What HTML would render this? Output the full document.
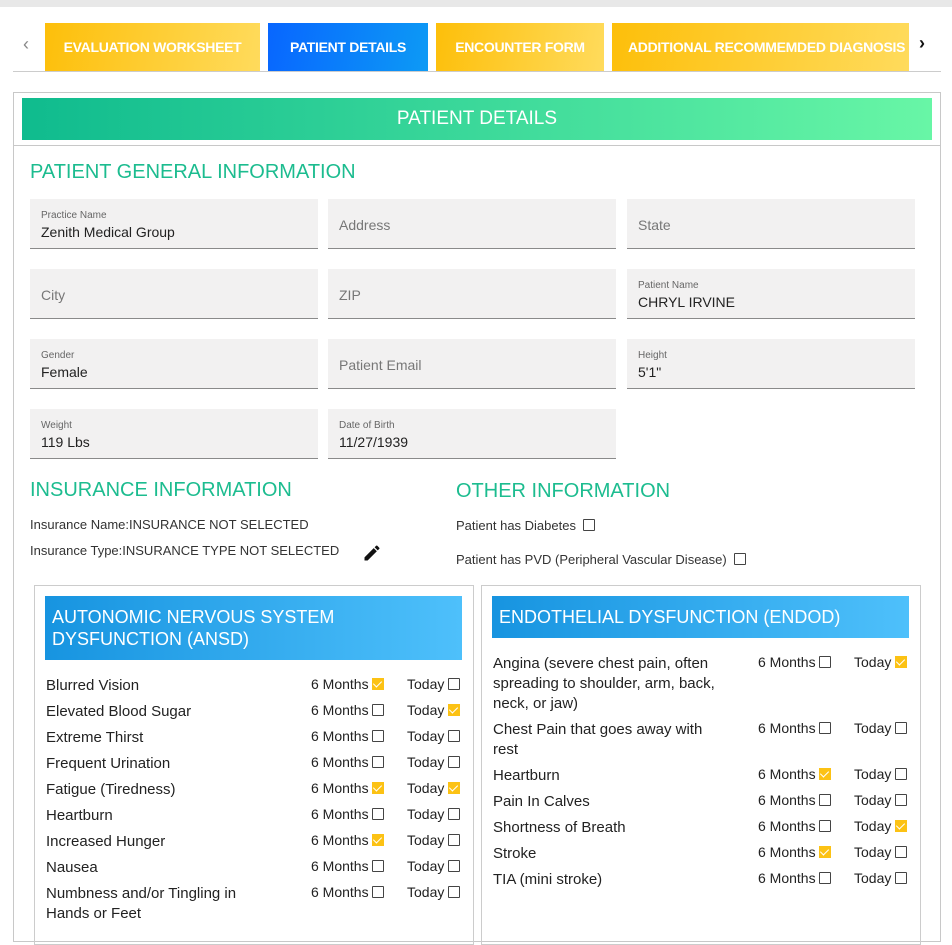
<!DOCTYPE html>
<html><head><style>
*{box-sizing:border-box;margin:0;padding:0}
body{width:952px;height:927px;overflow:hidden;background:#fff;font-family:"Liberation Sans",sans-serif;position:relative;color:#222}
.a{position:absolute}
.tab{position:absolute;top:23px;height:48px;color:#fff;font-weight:bold;font-size:14px;line-height:48px;text-align:center;letter-spacing:-0.3px;white-space:nowrap;overflow:hidden;background:linear-gradient(100deg,#fdbf0a,#ffdb5c)}
.f{position:absolute;width:288px;height:50px;background:#f2f1f1;border-bottom:1px solid #8a8a8a;padding-left:11px}
.f .l{font-size:10px;color:#666;margin-top:11px}
.f .v{font-size:14px;color:#222;margin-top:3px}
.f .p{font-size:14px;color:#777;line-height:52px}
.h{position:absolute;color:#1cbc8f;font-size:20px}
.sm{position:absolute;font-size:13px;color:#333}
.cb{display:inline-block;width:12px;height:12px;border:1.5px solid #444;border-radius:1px;vertical-align:-1px}
.ck{display:inline-block;width:12px;height:12px;background:#fcc214;vertical-align:-1px;position:relative}
.ck:after{content:"";position:absolute;left:3px;top:1px;width:4px;height:7px;border:solid #fff;border-width:0 1.2px 1.2px 0;transform:rotate(45deg)}
.it{position:absolute;font-size:15px;color:#222;line-height:20px}
.m{position:absolute;font-size:14px;color:#222}
</style></head><body>
<div class="a" style="left:0;top:0;width:952px;height:7px;background:#e8e8e8"></div>
<div class="a" style="left:23px;top:34px;color:#888;font-size:18px">‹</div>
<div class="a" style="left:919px;top:33px;color:#111;font-size:18px;font-weight:bold">›</div>
<div class="tab" style="left:45px;width:215px">EVALUATION WORKSHEET</div>
<div class="tab" style="left:268px;width:160px;background:linear-gradient(100deg,#0866ff,#0d9af5)">PATIENT DETAILS</div>
<div class="tab" style="left:436px;width:168px">ENCOUNTER FORM</div>
<div class="tab" style="left:612px;width:297px;text-align:left;padding-left:16px">ADDITIONAL RECOMMEMDED DIAGNOSIS</div>
<div class="a" style="left:13px;top:71px;width:928px;height:1px;background:#ccc"></div>
<div class="a" style="left:13px;top:92px;width:928px;height:850px;border:1px solid #c8c8c8"></div>
<div class="a" style="left:13px;top:145px;width:928px;height:1px;background:#c8c8c8"></div>
<div class="a" style="left:22px;top:98px;width:910px;height:42px;background:linear-gradient(90deg,#0fbb8e,#68f6a6);color:#fff;font-size:19px;text-align:center;line-height:42px">PATIENT DETAILS</div>
<div class="h" style="left:30px;top:161px">PATIENT GENERAL INFORMATION</div>

<div class="f" style="left:30px;top:199px"><div class="l">Practice Name</div><div class="v">Zenith Medical Group</div></div>
<div class="f" style="left:328px;top:199px"><div class="p">Address</div></div>
<div class="f" style="left:627px;top:199px"><div class="p">State</div></div>
<div class="f" style="left:30px;top:269px"><div class="p">City</div></div>
<div class="f" style="left:328px;top:269px"><div class="p">ZIP</div></div>
<div class="f" style="left:627px;top:269px"><div class="l">Patient Name</div><div class="v">CHRYL IRVINE</div></div>
<div class="f" style="left:30px;top:339px"><div class="l">Gender</div><div class="v">Female</div></div>
<div class="f" style="left:328px;top:339px"><div class="p">Patient Email</div></div>
<div class="f" style="left:627px;top:339px"><div class="l">Height</div><div class="v">5'1"</div></div>
<div class="f" style="left:30px;top:409px"><div class="l">Weight</div><div class="v">119 Lbs</div></div>
<div class="f" style="left:328px;top:409px"><div class="l">Date of Birth</div><div class="v">11/27/1939</div></div>

<div class="h" style="left:30px;top:479px">INSURANCE INFORMATION</div>
<div class="h" style="left:456px;top:480px">OTHER INFORMATION</div>
<div class="sm" style="left:30px;top:517px">Insurance Name:INSURANCE NOT SELECTED</div>
<div class="sm" style="left:30px;top:543px">Insurance Type:INSURANCE TYPE NOT SELECTED</div>
<svg class="a" style="left:362px;top:543px" width="20" height="20" viewBox="0 0 24 24"><path d="M3 17.25V21h3.75L17.81 9.94l-3.75-3.75L3 17.25zM20.71 7.04a1 1 0 000-1.41l-2.34-2.34a1 1 0 00-1.41 0l-1.83 1.83 3.75 3.75 1.83-1.83z" fill="#111"/></svg>
<div class="sm" style="left:456px;top:518px">Patient has Diabetes &nbsp;<span class="cb"></span></div>
<div class="sm" style="left:456px;top:552px">Patient has PVD (Peripheral Vascular Disease) &nbsp;<span class="cb"></span></div>

<div class="a" style="left:34px;top:585px;width:440px;height:360px;border:1px solid #ccc"></div>
<div class="a" style="left:481px;top:585px;width:440px;height:360px;border:1px solid #ccc"></div>
<div class="a" style="left:45px;top:596px;width:417px;height:64px;background:linear-gradient(90deg,#1794e0,#4ec0fb);color:#fff;font-size:18px;line-height:22px;padding:10px 7px">AUTONOMIC NERVOUS SYSTEM<br>DYSFUNCTION (ANSD)</div>
<div class="a" style="left:492px;top:596px;width:417px;height:42px;background:linear-gradient(90deg,#1794e0,#4ec0fb);color:#fff;font-size:18px;line-height:42px;padding-left:7px">ENDOTHELIAL DYSFUNCTION (ENDOD)</div>

<div class="it" style="left:46px;top:676px">Blurred Vision</div><div class="m" style="left:311px;top:676px">6 Months <span class="ck"></span></div><div class="m" style="left:407px;top:676px">Today <span class="cb"></span></div>
<div class="it" style="left:46px;top:702px">Elevated Blood Sugar</div><div class="m" style="left:311px;top:702px">6 Months <span class="cb"></span></div><div class="m" style="left:407px;top:702px">Today <span class="ck"></span></div>
<div class="it" style="left:46px;top:728px">Extreme Thirst</div><div class="m" style="left:311px;top:728px">6 Months <span class="cb"></span></div><div class="m" style="left:407px;top:728px">Today <span class="cb"></span></div>
<div class="it" style="left:46px;top:754px">Frequent Urination</div><div class="m" style="left:311px;top:754px">6 Months <span class="cb"></span></div><div class="m" style="left:407px;top:754px">Today <span class="cb"></span></div>
<div class="it" style="left:46px;top:780px">Fatigue (Tiredness)</div><div class="m" style="left:311px;top:780px">6 Months <span class="ck"></span></div><div class="m" style="left:407px;top:780px">Today <span class="ck"></span></div>
<div class="it" style="left:46px;top:806px">Heartburn</div><div class="m" style="left:311px;top:806px">6 Months <span class="cb"></span></div><div class="m" style="left:407px;top:806px">Today <span class="cb"></span></div>
<div class="it" style="left:46px;top:832px">Increased Hunger</div><div class="m" style="left:311px;top:832px">6 Months <span class="ck"></span></div><div class="m" style="left:407px;top:832px">Today <span class="cb"></span></div>
<div class="it" style="left:46px;top:858px">Nausea</div><div class="m" style="left:311px;top:858px">6 Months <span class="cb"></span></div><div class="m" style="left:407px;top:858px">Today <span class="cb"></span></div>
<div class="it" style="left:46px;top:884px">Numbness and/or Tingling in<br>Hands or Feet</div><div class="m" style="left:311px;top:884px">6 Months <span class="cb"></span></div><div class="m" style="left:407px;top:884px">Today <span class="cb"></span></div>

<div class="it" style="left:493px;top:654px">Angina (severe chest pain, often<br>spreading to shoulder, arm, back,<br>neck, or jaw)</div><div class="m" style="left:758px;top:654px">6 Months <span class="cb"></span></div><div class="m" style="left:854px;top:654px">Today <span class="ck"></span></div>
<div class="it" style="left:493px;top:720px">Chest Pain that goes away with<br>rest</div><div class="m" style="left:758px;top:720px">6 Months <span class="cb"></span></div><div class="m" style="left:854px;top:720px">Today <span class="cb"></span></div>
<div class="it" style="left:493px;top:766px">Heartburn</div><div class="m" style="left:758px;top:766px">6 Months <span class="ck"></span></div><div class="m" style="left:854px;top:766px">Today <span class="cb"></span></div>
<div class="it" style="left:493px;top:792px">Pain In Calves</div><div class="m" style="left:758px;top:792px">6 Months <span class="cb"></span></div><div class="m" style="left:854px;top:792px">Today <span class="cb"></span></div>
<div class="it" style="left:493px;top:818px">Shortness of Breath</div><div class="m" style="left:758px;top:818px">6 Months <span class="cb"></span></div><div class="m" style="left:854px;top:818px">Today <span class="ck"></span></div>
<div class="it" style="left:493px;top:844px">Stroke</div><div class="m" style="left:758px;top:844px">6 Months <span class="ck"></span></div><div class="m" style="left:854px;top:844px">Today <span class="cb"></span></div>
<div class="it" style="left:493px;top:870px">TIA (mini stroke)</div><div class="m" style="left:758px;top:870px">6 Months <span class="cb"></span></div><div class="m" style="left:854px;top:870px">Today <span class="cb"></span></div>
</body></html>
